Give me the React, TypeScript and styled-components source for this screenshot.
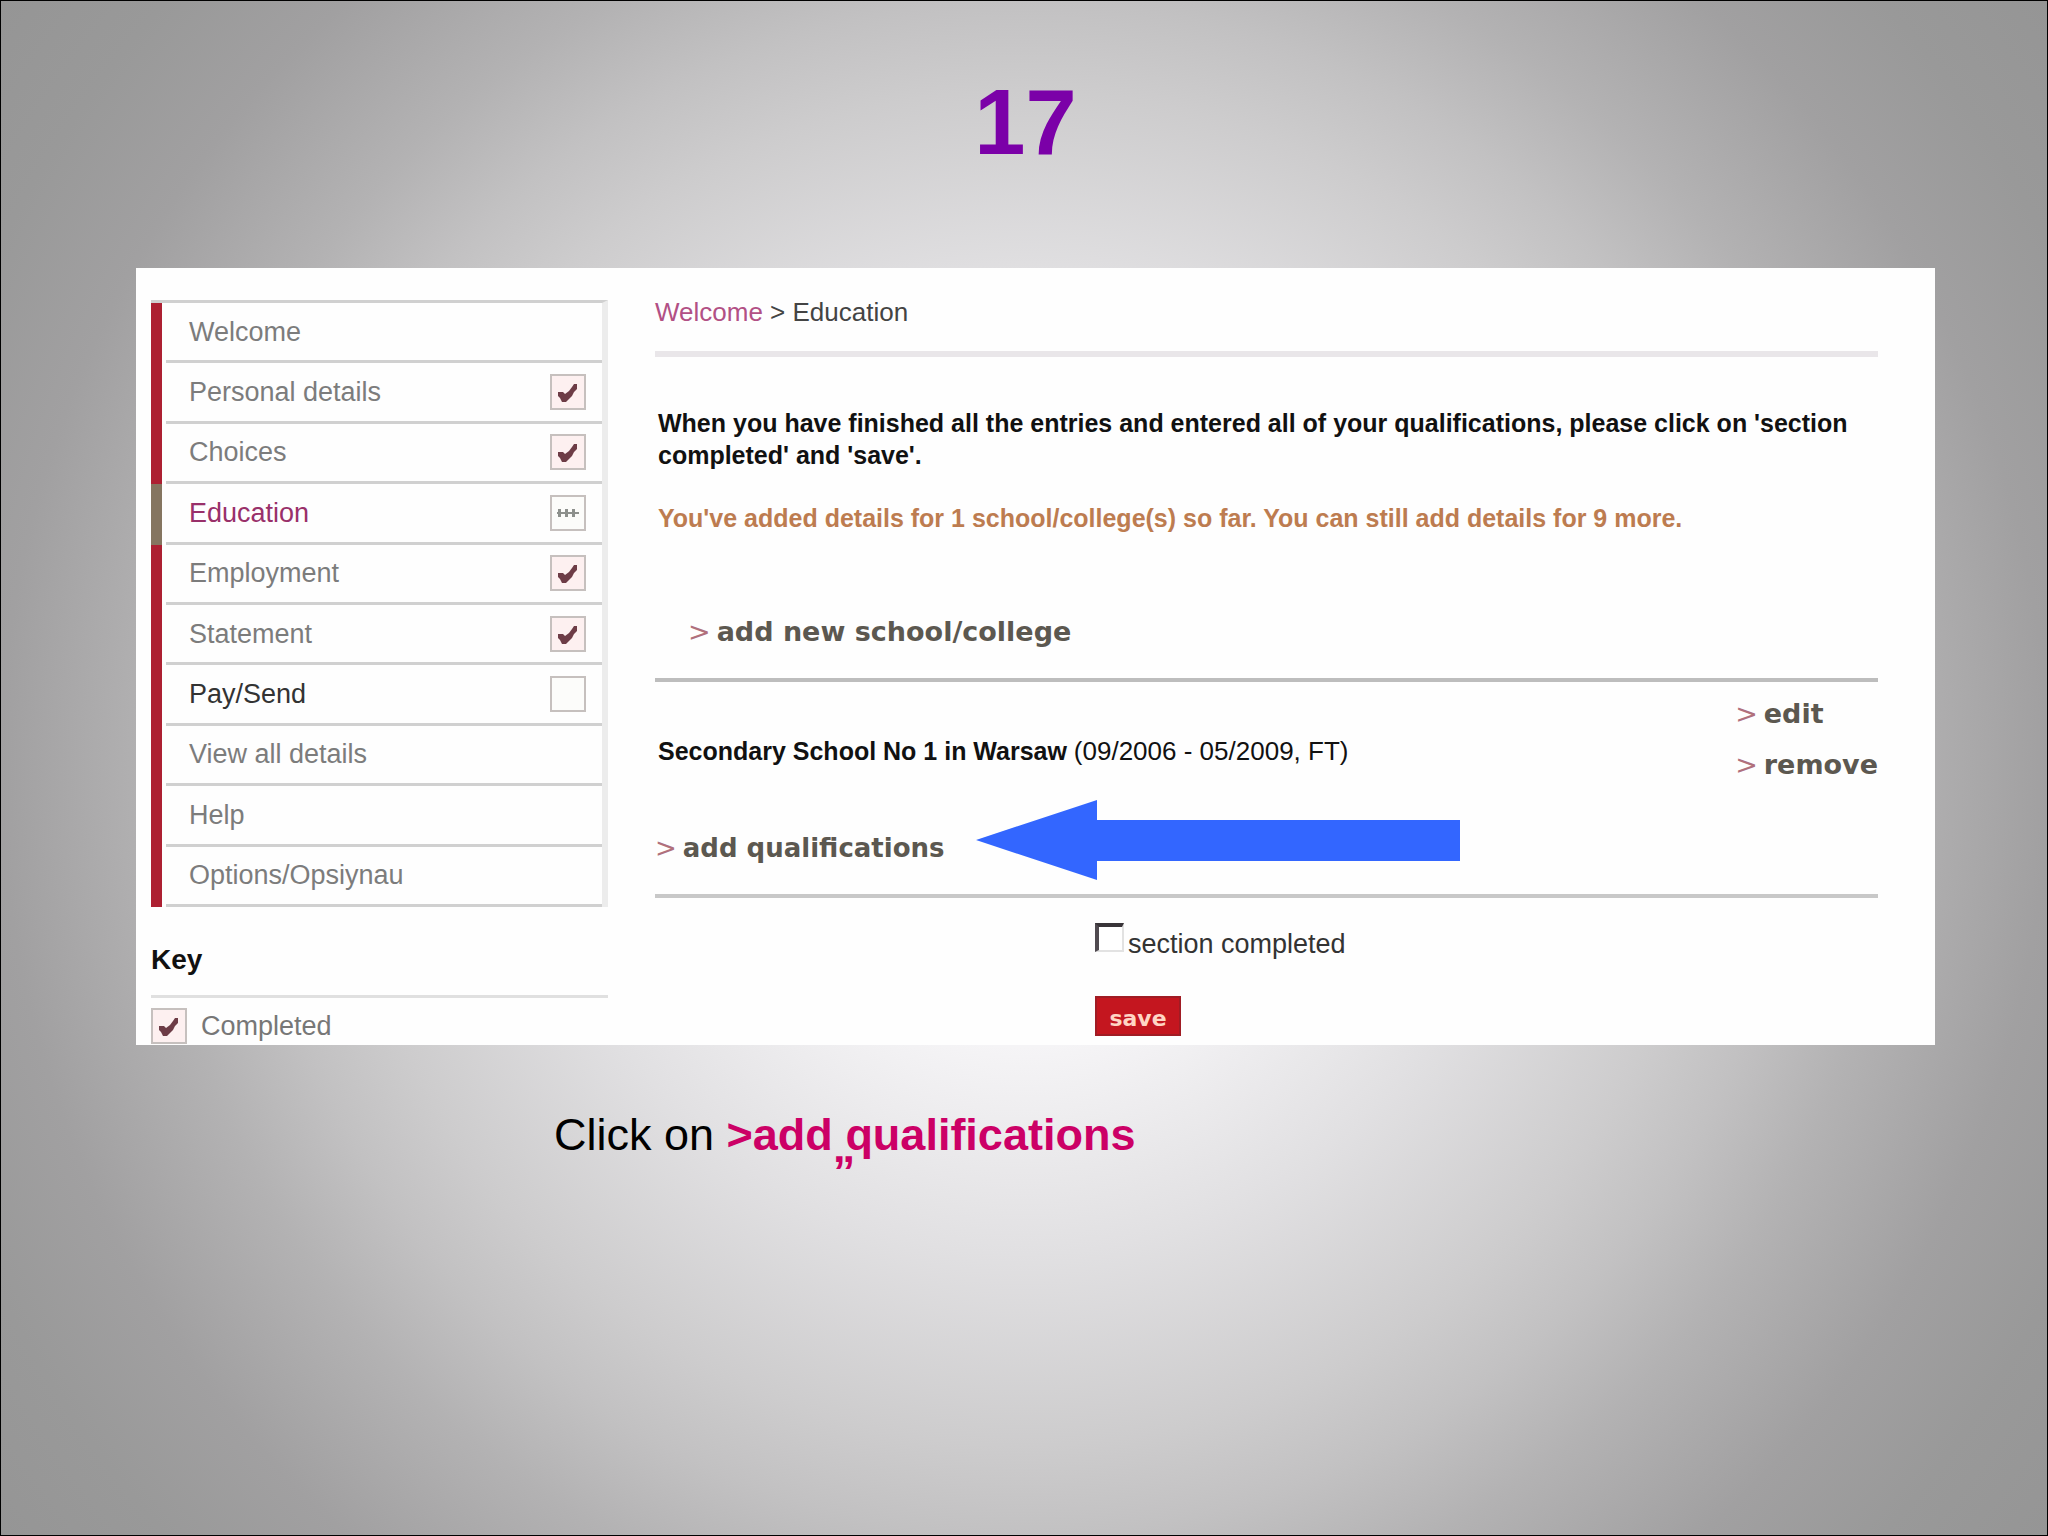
import React from "react";
import styled, { createGlobalStyle, css } from "styled-components";

const GlobalStyle = createGlobalStyle`
  *, *::before, *::after { box-sizing: border-box; }
  html, body { margin: 0; padding: 0; }
  body { font-family: "Liberation Sans", Arial, sans-serif; }
`;

const Slide = styled.main`
  min-height: 100vh;
  padding: 0 112px 0 135px;
  border: 1px solid #000;
  background: radial-gradient(
    circle farthest-corner at 50% 50%,
    #ffffff 0%,
    #f6f5f7 21%,
    #e1e0e2 38%,
    #cdcccd 53%,
    #c2c1c2 60%,
    #b3b2b3 68%,
    #a1a0a1 80%,
    #999999 90%,
    #959595 100%
  );
`;

const Title = styled.h1`
  margin: 0 20px 0 0;
  padding: 70px 0 94px;
  font-size: 92px;
  line-height: 103px;
  font-weight: 700;
  text-align: center;
  color: #7b00a8;
`;

const Panel = styled.section`
  display: grid;
  grid-template-columns: 457px minmax(0, 1fr);
  column-gap: 47px;
  padding: 32px 57px 0 15px;
  background: #fefefe;
`;

const Sidebar = styled.aside``;

const Menu = styled.ul`
  display: grid;
  grid-auto-rows: 1fr;
  min-height: 607px;
  list-style: none;
  margin: 0;
  padding: 0;
  border-top: 3px solid #d0d0d0;
  border-right: 6px solid #ececec;
`;

const MenuItem = styled.li<{ $active?: boolean }>`
  display: grid;
  border-left: 11px solid ${(p) => (p.$active ? "#857560" : "#ad2032")};
`;

const MenuLink = styled.a<{ $tone?: "active" | "dark" }>`
  display: flex;
  align-items: center;
  justify-content: space-between;
  margin-left: 4px;
  padding: 0 16px 0 23px;
  border-bottom: 3px solid #d0d0d0;
  font-size: 27px;
  line-height: 32px;
  text-decoration: none;
  color: #7c7c7c;
  ${(p) => p.$tone === "active" && css`color: #99306a; `}
  ${(p) => p.$tone === "dark" && css`color: #333; `}
`;

const StatusBox = styled.svg`
  display: block;
  flex: none;
  width: 36px;
  height: 36px;
`;

const KeyHeading = styled.h2`
  margin: 0;
  padding: 36px 0 18px;
  border-bottom: 3px solid #e0e0e0;
  font-size: 28px;
  line-height: 34px;
  color: #111;
`;

const KeyRow = styled.div`
  display: flex;
  align-items: center;
  gap: 14px;
  height: 47px;
  padding-top: 9px;
  font-size: 27px;
  line-height: 32px;
  color: #777;
  overflow: hidden;
`;

const Content = styled.div`
  display: flex;
  flex-direction: column;
  font-size: 25px;
  line-height: 32px;
  color: #111;
`;

const Breadcrumb = styled.nav`
  margin-top: -4px;
  padding-bottom: 23px;
  border-bottom: 6px solid #e9e6e9;
  font-size: 26px;
  color: #444;
`;

const CrumbLink = styled.a`
  color: #b25085;
  text-decoration: none;
`;

const Instruction = styled.p`
  margin: 50px 0 0;
  padding-left: 3px;
  font-weight: 700;
`;

const Progress = styled(Instruction)`
  margin: 31px 0 0;
  color: #bd7c50;
`;

const ActionLink = styled.a<{ $large?: boolean }>`
  display: inline-flex;
  gap: 6px;
  font-family: "DejaVu Sans", Verdana, sans-serif;
  font-size: ${(p) => (p.$large ? "27px" : "26px")};
  line-height: 32px;
  font-weight: 700;
  color: #5c5850;
  text-decoration: none;

  &::before {
    content: ">";
    font-weight: 400;
    color: #b0707c;
  }
`;

const AddSchool = styled.div`
  margin-top: 82px;
  padding: 0 0 30px 33px;
  border-bottom: 4px solid #bdbdbd;
`;

const School = styled.article`
  display: grid;
  grid-template-columns: minmax(0, 1fr) auto;
  padding: 16px 0 0;
  border-bottom: 4px solid #c8c8c8;
`;

const SchoolInfo = styled.div`
  display: flex;
  flex-direction: column;
  align-items: flex-start;
  gap: 65px;
  padding: 37px 0 30px;
`;

const SchoolName = styled.p`
  margin: 0;
  padding-left: 3px;
`;

const SchoolDates = styled.span`
  font-size: 26px;
`;

const SchoolActions = styled.div`
  display: flex;
  flex-direction: column;
  gap: 19px;
`;

const AddRow = styled.div`
  display: flex;
  align-items: center;
  gap: 31px;
  height: 32px;
`;

const Arrow = styled.svg`
  display: block;
  flex: none;
  width: 484px;
  height: 80px;
  margin-top: -16px;
`;

const CompleteForm = styled.form`
  display: flex;
  flex-direction: column;
  align-items: flex-start;
  padding: 25px 0 8px 440px;
`;

const CheckLabel = styled.label`
  display: flex;
  align-items: flex-end;
  gap: 4px;
  font-size: 27px;
  line-height: 32px;
  color: #333;
`;

const Check = styled.input`
  appearance: none;
  width: 29px;
  height: 29px;
  margin: 0 0 8px;
  background: #fff;
  border: 2px solid #e2e2e2;
  border-top: 4px solid #383438;
  border-left: 4px solid #504a50;
`;

const Save = styled.button`
  width: 86px;
  height: 40px;
  margin-top: 36px;
  padding: 6px 0 0;
  border: 2px solid #a01c24;
  background: #c4161f;
  color: #ffd5c4;
  font-family: "DejaVu Sans", Verdana, sans-serif;
  font-size: 22px;
  line-height: 28px;
  font-weight: 700;
`;

const Caption = styled.p`
  margin: 0;
  padding: 64px 0 0 418px;
  font-size: 45px;
  line-height: 52px;
  color: #000;
`;

const Highlight = styled.strong`
  color: #cc0066;
`;

const QuoteAnchor = styled.span`
  position: relative;
`;

const Quote = styled.span`
  position: absolute;
  left: 0;
  top: 30px;
  line-height: 16px;
`;

type Status = "done" | "progress" | "empty";

function StatusIcon({ status }: { status: Status }) {
  return (
    <StatusBox viewBox="0 0 36 36" aria-hidden="true">
      <rect x="1" y="1" width="34" height="34" fill={status === "done" ? "#fdf0f0" : "#fcfcfa"} stroke="#c6c0be" strokeWidth="2" />
      {status === "done" && (
        <path d="M8 18h5l2 2 4-3 3-4 2-3h3v5l-3 3-2 4-4 4-2 2h-4l-2-4-2-2z" fill="#6d3c46" />
      )}
      {status === "progress" && (
        <path d="M8 14h3v8H8zM15 14h3v8h-3zM22 14h3v8h-3zM7 17h22v2H7z" fill="#8d908c" />
      )}
    </StatusBox>
  );
}

const items: { label: string; status?: Status; tone?: "active" | "dark" }[] = [
  { label: "Welcome" },
  { label: "Personal details", status: "done" },
  { label: "Choices", status: "done" },
  { label: "Education", status: "progress", tone: "active" },
  { label: "Employment", status: "done" },
  { label: "Statement", status: "done" },
  { label: "Pay/Send", status: "empty", tone: "dark" },
  { label: "View all details" },
  { label: "Help" },
  { label: "Options/Opsiynau" },
];

export default function App() {
  return (
    <>
      <GlobalStyle />
      <Slide>
        <Title>17</Title>
        <Panel>
          <Sidebar>
            <Menu>
              {items.map((item) => (
                <MenuItem key={item.label} $active={item.tone === "active"}>
                  <MenuLink href="#" $tone={item.tone}>
                    {item.label}
                    {item.status && <StatusIcon status={item.status} />}
                  </MenuLink>
                </MenuItem>
              ))}
            </Menu>
            <KeyHeading>Key</KeyHeading>
            <KeyRow>
              <StatusIcon status="done" />
              Completed
            </KeyRow>
          </Sidebar>
          <Content>
            <Breadcrumb>
              <CrumbLink href="#">Welcome</CrumbLink> &gt; Education
            </Breadcrumb>
            <Instruction>
              When you have finished all the entries and entered all of your qualifications, please click on 'section
              completed' and 'save'.
            </Instruction>
            <Progress>
              You've added details for 1 school/college(s) so far. You can still add details for 9 more.
            </Progress>
            <AddSchool>
              <ActionLink href="#" $large>add new school/college</ActionLink>
            </AddSchool>
            <School>
              <SchoolInfo>
                <SchoolName>
                  <b>Secondary School No 1 in Warsaw</b> <SchoolDates>(09/2006 - 05/2009, FT)</SchoolDates>
                </SchoolName>
                <AddRow>
                  <ActionLink href="#">add qualifications</ActionLink>
                  <Arrow viewBox="0 0 484 80" aria-hidden="true">
                    <path d="M0 40 121 0V20H484V61H121V80Z" fill="#3366ff" />
                  </Arrow>
                </AddRow>
              </SchoolInfo>
              <SchoolActions>
                <ActionLink href="#" $large>edit</ActionLink>
                <ActionLink href="#" $large>remove</ActionLink>
              </SchoolActions>
            </School>
            <CompleteForm onSubmit={(e) => e.preventDefault()}>
              <CheckLabel htmlFor="section-completed">
                <Check id="section-completed" type="checkbox" />
                section completed
              </CheckLabel>
              <Save type="submit">save</Save>
            </CompleteForm>
          </Content>
        </Panel>
        <Caption>
          Click on <Highlight>&gt;add<QuoteAnchor> <Quote>„</Quote></QuoteAnchor>qualifications</Highlight>
        </Caption>
      </Slide>
    </>
  );
}
